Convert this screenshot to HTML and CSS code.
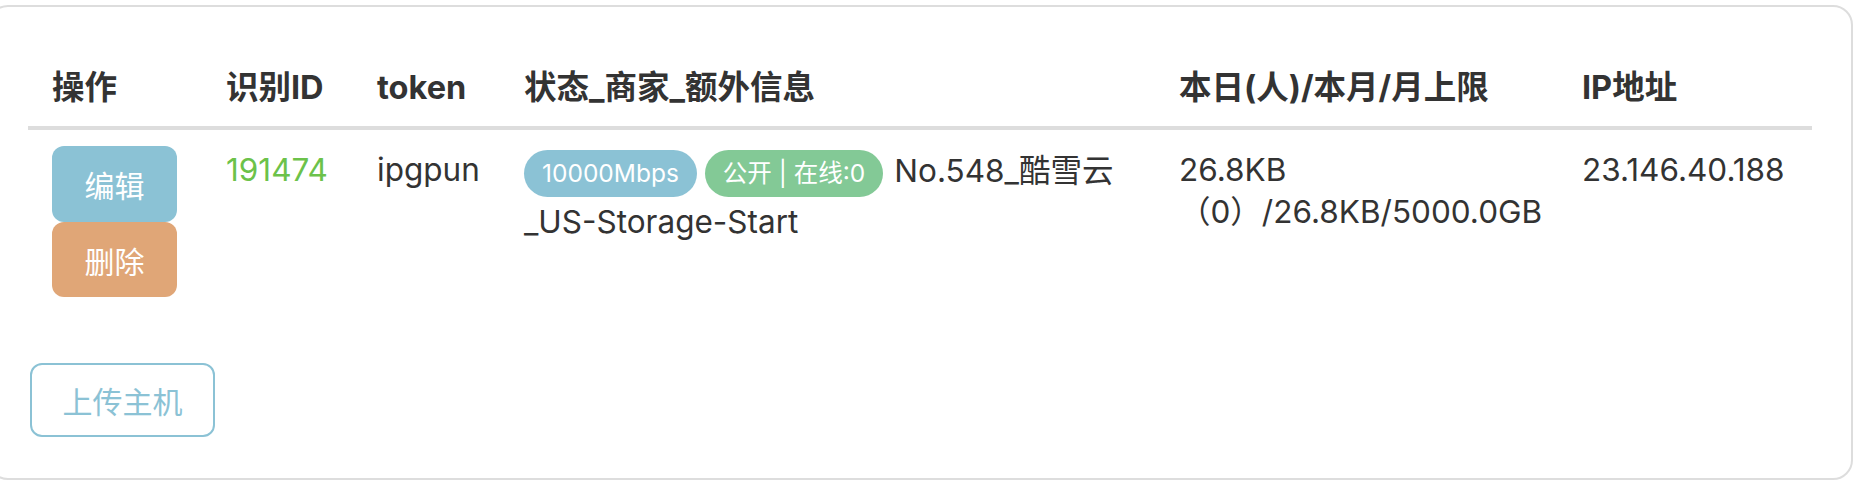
FILE: index.html
```html
<!DOCTYPE html>
<html lang="zh-CN">
<head>
<meta charset="utf-8">
<title>主机列表</title>
<link rel="stylesheet" href="styles.css">
</head>
<body>
<div class="panel">
  <table class="hosts">
    <colgroup>
      <col class="w-op">
      <col class="w-id">
      <col class="w-token">
      <col class="w-info">
      <col class="w-traffic">
      <col class="w-ip">
    </colgroup>
    <thead>
      <tr>
        <th>操作</th>
        <th>识别ID</th>
        <th>token</th>
        <th>状态_商家_额外信息</th>
        <th>本日(人)/本月/月上限</th>
        <th>IP地址</th>
      </tr>
    </thead>
    <tbody>
      <tr>
        <td class="cell-actions">
          <div class="actions">
            <button class="btn btn-edit">编辑</button>
            <button class="btn btn-delete">删除</button>
          </div>
        </td>
        <td class="cell-text id">191474</td>
        <td class="cell-text">ipgpun</td>
        <td class="cell-text"><span class="badge badge-speed">10000Mbps</span><span class="badge badge-status">公开 | 在线:0</span><span class="info">No.548_酷雪云_US-Storage-Start</span></td>
        <td class="cell-text">26.8KB（0）/26.8KB/5000.0GB</td>
        <td class="cell-text">23.146.40.188</td>
      </tr>
    </tbody>
  </table>
  <button class="btn-upload">上传主机</button>
</div>
</body>
</html>
```
FILE: styles.css
```css
* {
  box-sizing: border-box;
}

html, body {
  margin: 0;
  padding: 0;
  background: #ffffff;
}

body {
  font-family: "Inter", "Noto Sans CJK SC", sans-serif;
  font-size: 31.5px;
  line-height: 42px;
  color: #333333;
}

.panel {
  margin: 5px 0 0 -12px;
  width: 1865px;
  border: 2px solid #dddddd;
  border-radius: 20px;
  padding: 43px 39px 41px 38px;
  background: #ffffff;
}

.hosts {
  width: 100%;
  table-layout: fixed;
  border-collapse: collapse;
}

.w-op { width: 174px; }
.w-id { width: 151px; }
.w-token { width: 147px; }
.w-info { width: 655px; }
.w-traffic { width: 403px; }
.w-ip { width: 254px; }

.hosts th {
  text-align: left;
  font-weight: 700;
  font-size: 32.5px;
  line-height: 43px;
  padding: 16px 24px 17px 24px;
  border-bottom: 4px solid #dddddd;
  white-space: nowrap;
}

.hosts td {
  vertical-align: top;
  text-align: left;
  padding: 16px 24px 17px 24px;
}

.hosts td.cell-text {
  padding-top: 19px;
}

.traffic {
  letter-spacing: -0.1px;
}

.id {
  color: #6cc24a;
}

.actions {
  display: flex;
  flex-direction: column;
  align-items: flex-start;
}

.btn {
  display: block;
  width: 125px;
  border: none;
  border-radius: 12px;
  color: #ffffff;
  font-family: "Inter", "Noto Sans CJK SC", sans-serif;
  font-size: 30px;
  padding: 0;
  text-align: center;
}

.btn-edit {
  height: 76px;
  background: #8bc2d5;
}

.btn-delete {
  height: 75px;
  background: #e0a677;
}

.badge {
  display: inline-block;
  height: 47px;
  line-height: 29px;
  padding: 9px 18px;
  border-radius: 24px;
  font-size: 24.5px;
  color: #ffffff;
  margin: 1px 8px 4px 0;
  white-space: nowrap;
  vertical-align: baseline;
}

.badge-speed {
  background: #8bc2d5;
}

.badge-status {
  background: #83c996;
  margin-right: 11px;
}

.btn-upload {
  display: block;
  margin-top: 49px;
  margin-left: 2px;
  width: 185px;
  height: 74px;
  border: 2px solid #8bc2d5;
  border-radius: 12px;
  background: #ffffff;
  color: #8bc2d5;
  font-family: "Inter", "Noto Sans CJK SC", sans-serif;
  font-size: 30px;
  padding: 0;
}
```
